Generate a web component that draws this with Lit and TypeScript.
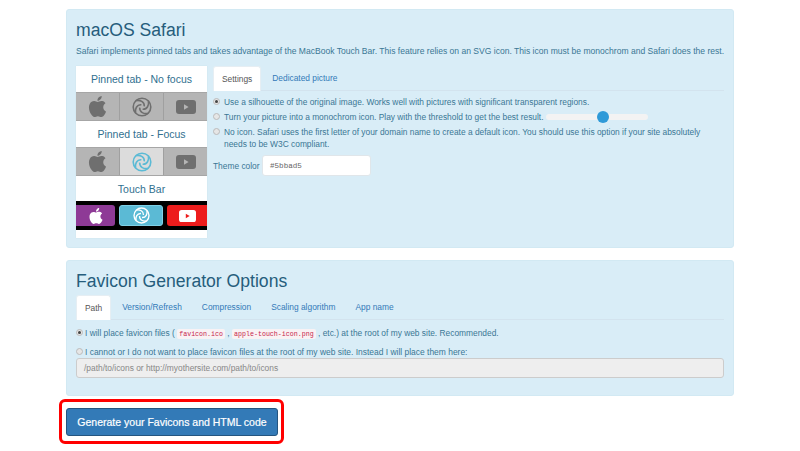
import { LitElement, html, css, svg } from "lit";
import { customElement } from "lit/decorators.js";

const APPLE = "M12.152 6.896c-.948 0-2.415-1.078-3.96-1.04-2.04.027-3.91 1.183-4.961 3.014-2.117 3.675-.546 9.103 1.519 12.09 1.013 1.454 2.208 3.09 3.792 3.039 1.52-.065 2.09-.987 3.935-.987 1.831 0 2.35.987 3.96.948 1.637-.026 2.676-1.48 3.676-2.948 1.156-1.688 1.636-3.325 1.662-3.415-.039-.013-3.182-1.221-3.22-4.857-.026-3.04 2.48-4.494 2.597-4.559-1.429-2.09-3.623-2.324-4.39-2.376-2-.156-3.675 1.09-4.61 1.09zM15.53 3.83c.843-1.012 1.4-2.427 1.245-3.83-1.207.052-2.662.805-3.532 1.818-.78.896-1.454 2.338-1.273 3.714 1.338.104 2.715-.688 3.559-1.701";

const apple = (color: string, size = 18) => html`<svg width=${size} height=${size} viewBox="0 0 24 24"><path d=${APPLE} fill=${color}></path></svg>`;

const swirl = (color: string, size = 20) => html`<svg width=${size} height=${size} viewBox="0 0 20 20" fill="none" stroke=${color} stroke-width="1.6">
  <circle cx="10" cy="10" r="8.8"></circle>
  ${[0, 90, 180, 270].map(
    (a) => svg`<path transform="rotate(${a} 10 10)" d="M4 3.6C8 2.8 12.6 4.6 12.3 9.4"></path>`
  )}
</svg>`;

const yt = (bg: string, fg: string, w = 20, h = 14) => html`<svg width=${w} height=${h} viewBox="0 0 20 14">
  <rect width="20" height="14" rx="3" fill=${bg}></rect>
  <path d="M8 4.3 12.6 7 8 9.7z" fill=${fg}></path>
</svg>`;

@customElement("app-root")
export class AppRoot extends LitElement {
  static styles = css`
    :host { display: block; width: 800px; height: 451px; overflow: hidden; background: #fff; font-family: "Liberation Sans", Arial, sans-serif; color: #3a7795; font-size: 8.4px; line-height: 12px; }
    .page { position: relative; display: flex; flex-direction: column; padding: 9px 66px 0; }
    .panel { background: #d9edf7; border: 1px solid #d2e9f3; border-radius: 3px; padding: 9px; }
    .p1 { height: 239px; box-sizing: border-box; margin-bottom: 12px; }
    .p2 { height: 136px; box-sizing: border-box; margin-bottom: 12px; }
    h2 { margin: 0; font-weight: 400; font-size: 17.6px; line-height: 22px; color: #265d7c; }
    .intro { margin: 4px 0 0; height: 12px; font-size: 8.55px; white-space: nowrap; }
    .cols { display: flex; gap: 6px; margin-top: 9px; }
    .pins { width: 131px; height: 172px; background: #fff; flex: none; display: flex; flex-direction: column; box-shadow: 0 0 1px #c5d8e2; }
    .pt { height: 26px; flex: none; display: flex; align-items: center; justify-content: center; font-size: 10.5px; color: #31708f; }
    .pt.t3 { height: 25px; }
    .bar { height: 29px; flex: none; display: grid; grid-template-columns: 43px 44px 44px; background: #b5b5b5; border-top: 1px solid #a6a6a6; border-bottom: 1px solid #a6a6a6; box-sizing: border-box; }
    .cell { display: flex; align-items: center; justify-content: center; border-left: 1px solid #a0a0a0; }
    .cell:first-child { border-left: 0; }
    .cell.on { background: #dcdcdc; }
    .tbar { height: 29px; flex: none; background: #000; display: grid; grid-template-columns: 39px 44px 40px; column-gap: 4px; padding: 4px 0; box-sizing: border-box; overflow: hidden; }
    .key { display: flex; align-items: center; justify-content: center; border-radius: 3px; }
    .k1 { background: #8e3a96; border-radius: 0 3px 3px 0; }
    .k2 { background: #5bbad5; border: 1px solid #7fd0e6; box-sizing: border-box; }
    .k3 { background: #ed1c1c; border-radius: 3px 0 0 3px; }
    .right { flex: 1; min-width: 0; }
    .tabs { display: flex; height: 25px; border-bottom: 1px solid #d3e3ee; box-sizing: border-box; }
    .tab { padding: 6px 10px 0; height: 25px; box-sizing: border-box; color: #337ab7; white-space: nowrap; }
    .tab.active { background: #fff; color: #555; border: 1px solid #e6eef3; border-bottom: 0; border-radius: 3px 3px 0 0; padding: 6px 8px 0; margin-right: 1px; }
    .p2 .tabs { margin-top: 3px; }
    .radio { display: flex; gap: 4px; }
    .dot { width: 7px; height: 7px; border-radius: 50%; background: #e6e6e6; border: 1px solid #bbb; box-sizing: border-box; flex: none; margin-top: 2px; display: flex; align-items: center; justify-content: center; }
    .dot.sel::after { content: ""; width: 3px; height: 3px; border-radius: 50%; background: #444; }
    .opts { display: flex; flex-direction: column; gap: 3px; margin-top: 5px; }
    .slider { position: relative; width: 102px; height: 6px; background: #f3f3f3; border-radius: 3px; margin: 3px 0 0 -2px; }
    .thumb { position: absolute; left: 51px; top: -3px; width: 12px; height: 12px; border-radius: 50%; background: #2f9ad8; }
    .theme { display: flex; align-items: center; margin-top: 5px; }
    .theme span { width: 49px; flex: none; }
    .field { width: 109px; height: 21px; background: #fff; border: 1px solid #e0e6ea; border-radius: 3px; box-sizing: border-box; display: flex; align-items: center; padding-left: 7px; font-family: "Liberation Mono", monospace; font-size: 7.6px; color: #666; }
    .wide { display: flex; align-items: center; height: 20px; box-sizing: border-box; background: #eee; border: 1px solid #ccc; border-radius: 3px; padding-left: 7px; color: #888; }
    .r1 { margin-top: 7px; gap: 2px; }
    .r2 { margin-top: 6px; gap: 2px; font-size: 8.46px; }
    code { font-family: "Liberation Mono", monospace; font-size: 6.65px; color: #c7254e; background: #f9f2f4; padding: 1px 2px; border-radius: 2px; }
    .gen { align-self: flex-start; height: 28px; width: 212px; box-sizing: border-box; background: #337ab7; border: 1px solid #245580; border-radius: 3px; color: #fff; font-family: inherit; font-size: 10.5px; display: flex; align-items: center; justify-content: center; -webkit-text-stroke: 0.2px #fff; }
    .hl { position: absolute; left: 59px; top: 399px; width: 225px; height: 45px; box-sizing: border-box; border: 3px solid #f00; border-radius: 6px; }
  `;

  render() {
    const g = "#6f6f6f";
    return html`<div class="page">
      <section class="panel p1">
        <h2>macOS Safari</h2>
        <p class="intro">Safari implements pinned tabs and takes advantage of the MacBook Touch Bar. This feature relies on an SVG icon. This icon must be monochrom and Safari does the rest.</p>
        <div class="cols">
          <div class="pins">
            <div class="pt">Pinned tab - No focus</div>
            <div class="bar">
              <div class="cell">${apple(g, 21)}</div>
              <div class="cell">${swirl(g)}</div>
              <div class="cell">${yt(g, "#b5b5b5")}</div>
            </div>
            <div class="pt">Pinned tab - Focus</div>
            <div class="bar">
              <div class="cell">${apple(g, 21)}</div>
              <div class="cell on">${swirl("#5bbad5")}</div>
              <div class="cell">${yt(g, "#b5b5b5")}</div>
            </div>
            <div class="pt t3">Touch Bar</div>
            <div class="tbar">
              <div class="key k1">${apple("#fff", 16)}</div>
              <div class="key k2">${swirl("#fff", 17)}</div>
              <div class="key k3">${yt("#fff", "#ed1c1c", 17, 12)}</div>
            </div>
          </div>
          <div class="right">
            <div class="tabs">
              <div class="tab active">Settings</div>
              <div class="tab">Dedicated picture</div>
            </div>
            <div class="opts">
              <div class="radio"><span class="dot sel"></span><span>Use a silhouette of the original image. Works well with pictures with significant transparent regions.</span></div>
              <div class="radio"><span class="dot"></span><span>Turn your picture into a monochrom icon. Play with the threshold to get the best result.</span><div class="slider"><div class="thumb"></div></div></div>
              <div class="radio"><span class="dot"></span><span>No icon. Safari uses the first letter of your domain name to create a default icon. You should use this option if your site absolutely needs to be W3C compliant.</span></div>
            </div>
            <div class="theme"><span>Theme color</span><div class="field">#5bbad5</div></div>
          </div>
        </div>
      </section>
      <section class="panel p2">
        <h2>Favicon Generator Options</h2>
        <div class="tabs">
          <div class="tab active">Path</div>
          <div class="tab">Version/Refresh</div>
          <div class="tab">Compression</div>
          <div class="tab">Scaling algorithm</div>
          <div class="tab">App name</div>
        </div>
        <div class="radio r1"><span class="dot sel"></span><span>I will place favicon files ( <code>favicon.ico</code> , <code>apple-touch-icon.png</code> , etc.) at the root of my web site. Recommended.</span></div>
        <div class="radio r2"><span class="dot"></span><span>I cannot or I do not want to place favicon files at the root of my web site. Instead I will place them here:</span></div>
        <div class="wide">/path/to/icons or http://myothersite.com/path/to/icons</div>
      </section>
      <button class="gen">Generate your Favicons and HTML code</button>
      <div class="hl"></div>
    </div>`;
  }
}
